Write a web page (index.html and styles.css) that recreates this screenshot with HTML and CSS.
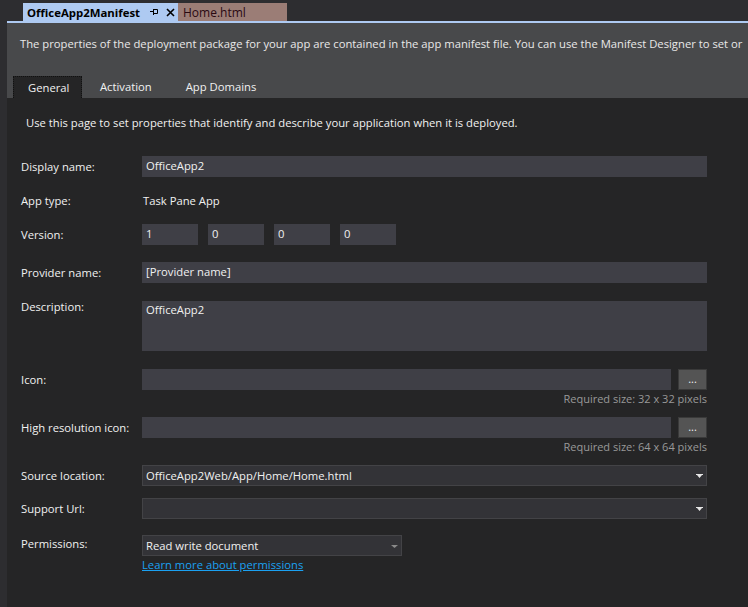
FILE: index.html
```html
<!DOCTYPE html>
<html>
<head>
<meta charset="utf-8">
<link rel="stylesheet" href="styles.css">
</head>
<body>
<div class="tabstrip">
  <div class="doctab active">
    <span class="doctab-title">OfficeApp2Manifest</span>
    <svg class="pin" width="8" height="8" viewBox="0 0 8 8"><path d="M0 3.5h3M3.5 1v6M3.5 1.5h4v4h-4" fill="none" stroke="#000" stroke-width="1"/></svg>
    <svg class="close" width="9" height="9" viewBox="0 0 9 9"><path d="M1 1l7 7M8 1l-7 7" stroke="#000" stroke-width="1.6"/></svg>
  </div>
  <div class="doctab other">Home.html</div>
</div>
<div class="doc">
  <div class="header">
    <p class="intro">The properties of the deployment package for your app are contained in the app manifest file. You can use the Manifest Designer to set or</p>
    <div class="pagetabs">
      <div class="pagetab selected">General</div>
      <div class="pagetab">Activation</div>
      <div class="pagetab">App Domains</div>
    </div>
  </div>
  <div class="content">
    <p class="lead">Use this page to set properties that identify and describe your application when it is deployed.</p>
    <div class="row r-display">
      <div class="label">Display name:</div>
      <div class="field"><div class="input wide">OfficeApp2</div></div>
    </div>
    <div class="row r-type">
      <div class="label">App type:</div>
      <div class="field"><div class="plain">Task Pane App</div></div>
    </div>
    <div class="row r-version">
      <div class="label">Version:</div>
      <div class="field versions">
        <div class="input ver">1</div>
        <div class="input ver">0</div>
        <div class="input ver">0</div>
        <div class="input ver">0</div>
      </div>
    </div>
    <div class="row r-provider">
      <div class="label">Provider name:</div>
      <div class="field"><div class="input wide">[Provider name]</div></div>
    </div>
    <div class="row r-desc">
      <div class="label">Description:</div>
      <div class="field"><div class="input wide textarea">OfficeApp2</div></div>
    </div>
    <div class="row r-icon">
      <div class="label">Icon:</div>
      <div class="field">
        <div class="browse"><div class="input grow"></div><div class="btn">...</div></div>
        <div class="hint">Required size: 32 x 32 pixels</div>
      </div>
    </div>
    <div class="row r-hires">
      <div class="label">High resolution icon:</div>
      <div class="field">
        <div class="browse"><div class="input grow"></div><div class="btn">...</div></div>
        <div class="hint">Required size: 64 x 64 pixels</div>
      </div>
    </div>
    <div class="row r-source">
      <div class="label">Source location:</div>
      <div class="field"><div class="combo wide"><span>OfficeApp2Web/App/Home/Home.html</span><svg class="arrow" width="7" height="5" viewBox="0 0 7 5"><path d="M0 0h7v1H0zM1 1h5L3.5 4z" fill="#e6e6e6"/></svg></div></div>
    </div>
    <div class="row r-support">
      <div class="label">Support Url:</div>
      <div class="field"><div class="combo wide"><span></span><svg class="arrow" width="7" height="5" viewBox="0 0 7 5"><path d="M0 0h7v1H0zM1 1h5L3.5 4z" fill="#e6e6e6"/></svg></div></div>
    </div>
    <div class="row r-perm">
      <div class="label">Permissions:</div>
      <div class="field">
        <div class="combo perm"><span>Read write document</span><svg class="arrow" width="7" height="5" viewBox="0 0 7 5"><path d="M0 1h7L3.5 4z" fill="#8a8a8a"/></svg></div>
        <a class="link" href="#">Learn more about permissions</a>
      </div>
    </div>
  </div>
</div>
</body>
</html>
```
FILE: styles.css
```css
html, body {
  margin: 0;
  padding: 0;
  height: 100%;
}
body {
  background: #2d2d30;
  font-family: "Open Sans", "Noto Sans", sans-serif;
  font-size: 11.25px;
  color: #f1f1f1;
  overflow: hidden;
  display: flex;
  flex-direction: column;
}
.tabstrip {
  height: 21px;
  display: flex;
  align-items: flex-end;
  padding-left: 23px;
  flex: none;
}
.doctab {
  height: 18px;
  display: flex;
  align-items: center;
  font-size: 12px;
  white-space: nowrap;
  box-sizing: border-box;
}
.doctab.active {
  background: #aecaf2;
  color: #000;
  font-weight: bold;
  font-size: 11.4px;
  padding: 0 4px 0 4px;
  width: 155px;
}
.doctab-title { flex: none; }
.pin { margin-left: 10px; flex: none; }
.close { margin-left: 8px; flex: none; }
.doctab.other {
  background: #9b7d76;
  color: #2a0912;
  padding-left: 5px;
  width: 109px;
}
.doc {
  margin-left: 7px;
  border-top: 2px solid #aecaf2;
  flex: 1;
  display: flex;
  flex-direction: column;
  min-width: 0;
}
.header {
  background: #48494b;
  height: 75px;
  display: flex;
  flex-direction: column;
  flex: none;
  overflow: hidden;
}
.intro {
  margin: 13px 0 0 13px;
  white-space: nowrap;
  color: #e8e8e8;
  line-height: 16px;
}
.pagetabs {
  margin-top: auto;
  display: flex;
  padding-left: 6px;
  height: 22px;
}
.pagetab {
  height: 22px;
  line-height: 22px;
  padding: 0 19px 0 15px;
  color: #f1f1f1;
  box-sizing: border-box;
}
.pagetab.selected {
  background: #252526;
  border: 1px dotted #111;
  border-bottom: none;
  width: 69px;
  padding: 0 0 0 14px;
  line-height: 21px;
  margin-right: 3px;
}
.content {
  background: #252526;
  flex: 1;
  padding: 0 0 0 14px;
}
.lead {
  margin: 17px 0 0 5px;
  line-height: 16px;
  color: #f1f1f1;
}
.row {
  display: flex;
  align-items: flex-start;
}
.label {
  width: 121px;
  flex: none;
  line-height: 21px;
  color: #f1f1f1;
}
.field {
  width: 565px;
  flex: none;
  display: flex;
  flex-direction: column;
}
.input {
  background: #3f3f46;
  height: 21px;
  line-height: 19px;
  padding-left: 4px;
  box-sizing: border-box;
  color: #f1f1f1;
}
.wide { width: 565px; }
.textarea { height: 50px; line-height: 18px; }
.plain { line-height: 21px; padding-left: 1px; }
.versions { flex-direction: row; gap: 10px; }
.ver { width: 56px; }
.browse { display: flex; gap: 7px; }
.grow { flex: 1; }
.btn {
  width: 29px;
  height: 21px;
  box-sizing: border-box;
  background: #545454;
  border: 1px solid #3a3a3a;
  color: #f1f1f1;
  text-align: center;
  line-height: 17px;
  font-size: 11px;
  flex: none;
}
.hint {
  text-align: right;
  color: #999999;
  font-size: 11px;
  line-height: 15px;
  margin-top: 1px;
}
.combo {
  height: 21px;
  box-sizing: border-box;
  background: #333337;
  border: 1px solid #434346;
  display: flex;
  align-items: center;
  justify-content: space-between;
  padding: 0 3px 0 3px;
  color: #f1f1f1;
}
.combo .arrow { flex: none; margin-top: 1px; }
.perm { width: 260px; }
.link {
  color: #1ba1f2;
  text-decoration: underline;
  line-height: 16px;
  margin-top: 1px;
  align-self: flex-start;
}
.r-display { margin-top: 25px; }
.r-type { margin-top: 13px; }
.r-version { margin-top: 13px; }
.r-provider { margin-top: 17px; }
.r-desc { margin-top: 18px; }
.r-desc .label { line-height: 12px; margin-top: 0; }
.r-icon { margin-top: 18px; }
.r-hires { margin-top: 11px; }
.r-source { margin-top: 11px; }
.r-support { margin-top: 12px; }
.r-perm { margin-top: 16px; }
.r-perm .label { line-height: 17px; }
```
